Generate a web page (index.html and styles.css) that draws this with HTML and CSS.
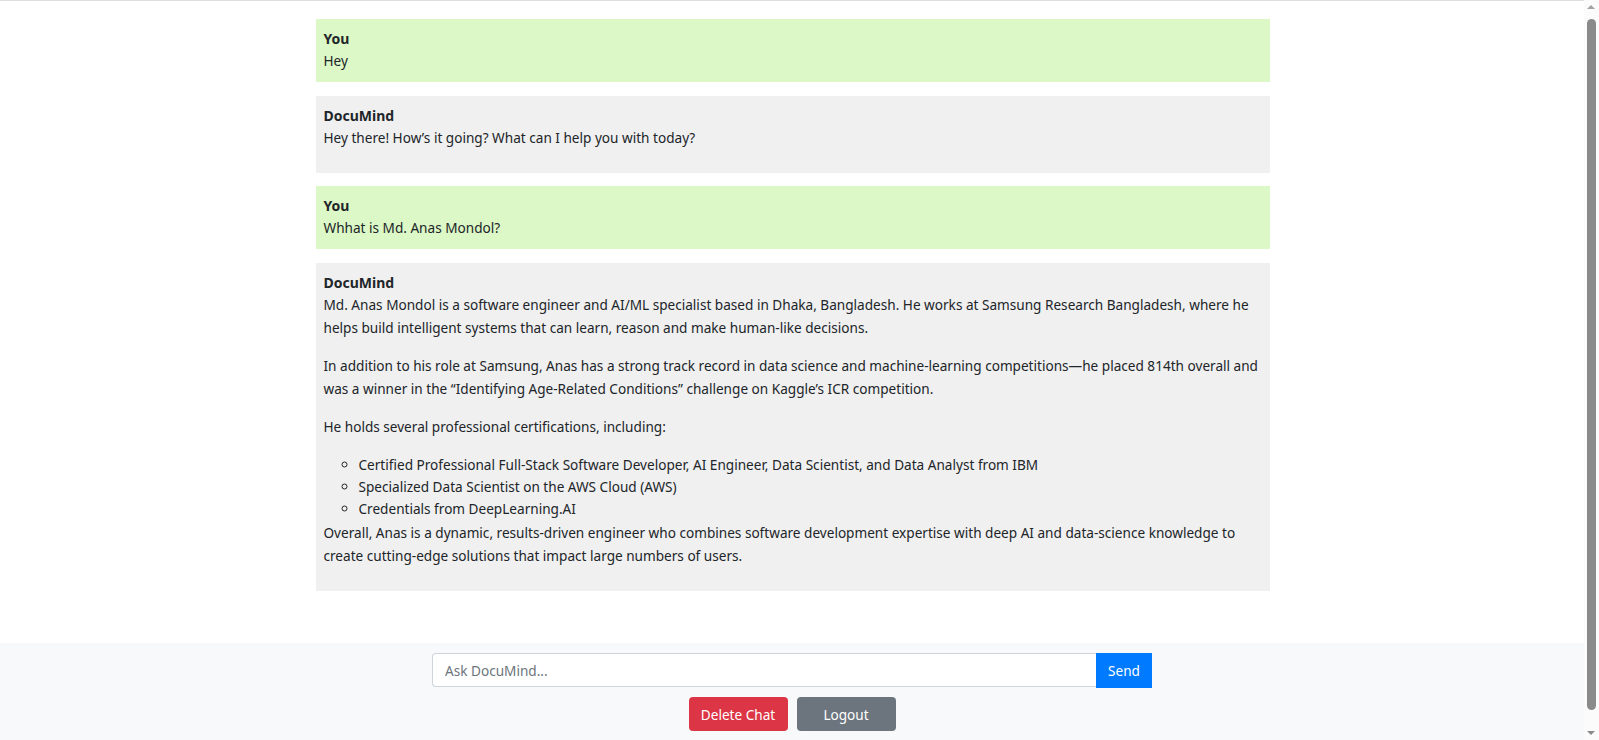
FILE: index.html
```html
<!DOCTYPE html>
<html lang="en">
<head>
<meta charset="utf-8">
<title>DocuMind</title>
<link rel="stylesheet" href="styles.css">
</head>
<body>
<main class="chat">
  <div class="msg user">
    <div class="who">You</div>
    <div class="text">Hey</div>
  </div>
  <div class="msg bot">
    <div class="who">DocuMind</div>
    <div class="text"><p>Hey there! How’s it going? What can I help you with today?</p></div>
  </div>
  <div class="msg user">
    <div class="who">You</div>
    <div class="text">Whhat is Md. Anas Mondol?</div>
  </div>
  <div class="msg bot">
    <div class="who">DocuMind</div>
    <div class="text">
      <p>Md. Anas Mondol is a software engineer and AI/ML specialist based in Dhaka, Bangladesh. He works at Samsung Research Bangladesh, where he helps build intelligent systems that can learn, reason and make human-like decisions.</p>
      <p>In addition to his role at Samsung, Anas has a strong track record in data science and machine-learning competitions—he placed 814th overall and was a winner in the “Identifying Age-Related Conditions” challenge on Kaggle’s ICR competition.</p>
      <p>He holds several professional certifications, including:</p>
      <ul>
        <li>Certified Professional Full-Stack Software Developer, AI Engineer, Data Scientist, and Data Analyst from IBM</li>
        <li>Specialized Data Scientist on the AWS Cloud (AWS)</li>
        <li>Credentials from DeepLearning.AI</li>
      </ul>
      <p>Overall, Anas is a dynamic, results-driven engineer who combines software development expertise with deep AI and data-science knowledge to create cutting-edge solutions that impact large numbers of users.</p>
    </div>
  </div>
</main>
<footer class="composer">
  <form class="ask">
    <input class="ask-input" type="text" placeholder="Ask DocuMind...">
    <button class="btn btn-send" type="button">Send</button>
  </form>
  <div class="actions">
    <button class="btn btn-danger" type="button">Delete Chat</button>
    <button class="btn btn-secondary" type="button">Logout</button>
  </div>
</footer>
<div class="scrollbar" aria-hidden="true">
  <span class="sb-arrow sb-up"></span>
  <span class="sb-thumb"></span>
  <span class="sb-arrow sb-down"></span>
</div>
</body>
</html>
```

FILE: styles.css
```css
* { box-sizing: border-box; }

html, body {
  margin: 0;
  padding: 0;
}

body {
  font-family: "Noto Sans", "Open Sans", sans-serif;
  font-size: 13.6px;
  color: #212529;
  background: #fff;
  border-top: 1px solid #dedede;
  padding-right: 14px;
}

.chat {
  max-width: 954px;
  margin: 0 auto;
  padding: 18px 0 168px;
}

.msg {
  padding: 10px 8px;
  margin-bottom: 13.5px;
}

.msg.user { background: #dcf8c6; }
.msg.bot { background: #f0f0f0; }

.who {
  font-weight: 700;
  font-size: 14px;
  line-height: 20px;
}

.text {
  line-height: 23.5px;
}

.user .text {
  line-height: 23px;
}

.text p {
  margin: 0 0 14px;
}

.text p:last-child {
  margin-bottom: 13.5px;
}

.text ul {
  margin: 15.5px 0 0;
  padding-left: 35px;
  list-style-type: circle;
  line-height: 22.4px;
}

.composer {
  position: fixed;
  left: 0;
  right: 15px;
  bottom: 0;
  background: #f8f9fa;
  padding: 10px 0 9px;
  display: flex;
  flex-direction: column;
  align-items: center;
  gap: 9px;
}

.ask {
  display: flex;
  width: 720px;
  margin: 0;
}

.ask-input {
  flex: 1;
  height: 34px;
  padding: 0 12px;
  font: inherit;
  font-size: 13.6px;
  color: #495057;
  border: 1px solid #ced4da;
  border-right: 0;
  border-radius: 4px 0 0 4px;
  background: #fff;
  outline: none;
}

.ask-input::placeholder { color: #6c757d; }

.btn {
  font: inherit;
  font-size: 13.6px;
  border: 0;
  color: #fff;
  height: 34px;
  cursor: pointer;
}

.btn-send {
  width: 56px;
  background: #007bff;
  border-radius: 0;
  height: 35px;
}

.actions {
  display: flex;
  gap: 9px;
}

.btn-danger,
.btn-secondary {
  width: 99px;
  border-radius: 4px;
}

.btn-danger { background: #dc3545; }
.btn-secondary { background: #6c757d; }

/* browser scrollbar strip */
.scrollbar {
  position: fixed;
  top: 0;
  right: 0;
  bottom: 0;
  width: 15px;
  background: #fbfbfb;
}

.sb-thumb {
  position: absolute;
  top: 19px;
  bottom: 30px;
  left: 3px;
  width: 9px;
  border-radius: 5px;
  background: #8a8a8a;
}

.sb-arrow {
  position: absolute;
  left: 3px;
  width: 0;
  height: 0;
  border-left: 4.5px solid transparent;
  border-right: 4.5px solid transparent;
}

.sb-up {
  top: 5px;
  border-bottom: 4px solid #a3a3a3;
}

.sb-down {
  bottom: 5px;
  border-top: 4px solid #8a8a8a;
}
```
